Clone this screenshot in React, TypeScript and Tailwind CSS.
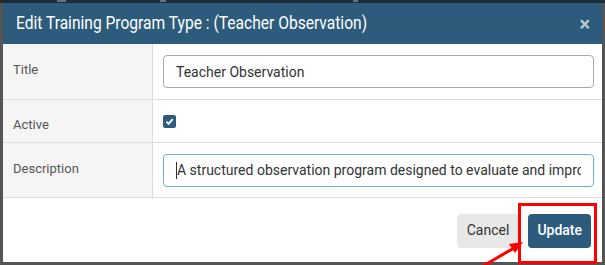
import React from "react";

const font = { fontFamily: "Roboto, 'Liberation Sans', sans-serif" };

function Row({ label, children, h }: { label: string; children: React.ReactNode; h: string }) {
  return (
    <div className={`flex border-b border-[#dddddd] ${h}`}>
      <div className="w-[150px] shrink-0 border-r border-[#dddddd] bg-[#f5f5f5] pl-[10px] pt-[16px] text-[13px] text-[#555]">
        {label}
      </div>
      <div className="min-w-0 flex-1 pl-[10px] pr-[8px] pt-[11px]">{children}</div>
    </div>
  );
}

export default function App() {
  return (
    <div className="relative h-[265px] w-[605px] overflow-hidden bg-[#555]" style={font}>
      <div className="flex h-[3px] items-start bg-[#1c2b35]">
        <span className="ml-[57px] h-[2px] w-[9px] bg-[#6a7278]" />
        <span className="ml-[94px] h-[2px] w-[6px] bg-[#6a7278]" />
        <span className="ml-[187px] h-[2px] w-[5px] bg-[#6a7278]" />
      </div>
      <div className="mx-[3px] flex h-[259px] w-[599px] flex-col bg-white">
        <div className="flex h-[41px] items-center justify-between bg-[#2c5b7b] pl-[13px] pr-[12px]">
          <h2 className="origin-left scale-x-[0.82] whitespace-nowrap text-[19px] text-white">
            Edit Training Program Type : (Teacher Observation)
          </h2>
          <span className="text-[20px] font-bold leading-none text-[#b9cbd7]">×</span>
        </div>
        <Row label="Title" h="h-[56px]">
          <input
            readOnly
            value="Teacher Observation"
            className="h-[33px] w-full rounded-[4px] border border-[#aaa] px-[12px] text-[14px] text-[#333] outline-none"
            style={font}
          />
        </Row>
        <div className="flex h-[43px] border-b border-[#dddddd]">
          <div className="w-[150px] shrink-0 border-r border-[#dddddd] bg-[#f5f5f5] pl-[10px] pt-[15px] text-[13px] text-[#555]">
            Active
          </div>
          <div className="flex-1 pl-[10px] pt-[15px]">
            <div className="flex h-[13px] w-[13px] items-center justify-center rounded-[2px] bg-[#2c5b7b]">
              <svg width="9" height="9" viewBox="0 0 10 10">
                <path d="M1.5 5.2 L4 7.6 L8.6 2.4" stroke="white" strokeWidth="2" fill="none" />
              </svg>
            </div>
          </div>
        </div>
        <Row label="Description" h="h-[55px]">
          <div className="flex h-[33px] w-full items-center overflow-hidden rounded-[4px] border border-[#66afe9] px-[12px] text-[14px] text-[#333]">
            <span className="h-[17px] w-px shrink-0 bg-[#333]" />
            <span className="min-w-0 overflow-hidden whitespace-nowrap">
              A structured observation program designed to evaluate and improve teaching practice
            </span>
          </div>
        </Row>
        <div className="flex flex-1 items-center justify-end gap-[9px] pr-[11px] pt-[1px]">
          <button className="h-[34px] rounded-[4px] bg-[#e8e8e8] px-[10px] text-[14px] text-[#333]">Cancel</button>
          <button className="h-[34px] rounded-[4px] bg-[#2c5b7b] px-[9px] text-[14px] font-medium text-white">Update</button>
        </div>
      </div>
      <div className="absolute left-[518px] top-[203px] h-[61px] w-[79px] border-[3px] border-[#f00]" />
      <svg className="absolute left-0 top-0" width="605" height="265">
        <line x1="483" y1="266" x2="514" y2="248" stroke="#f00" strokeWidth="3" />
        <polygon points="523,242 509,244 515,253" fill="#f00" />
      </svg>
    </div>
  );
}
